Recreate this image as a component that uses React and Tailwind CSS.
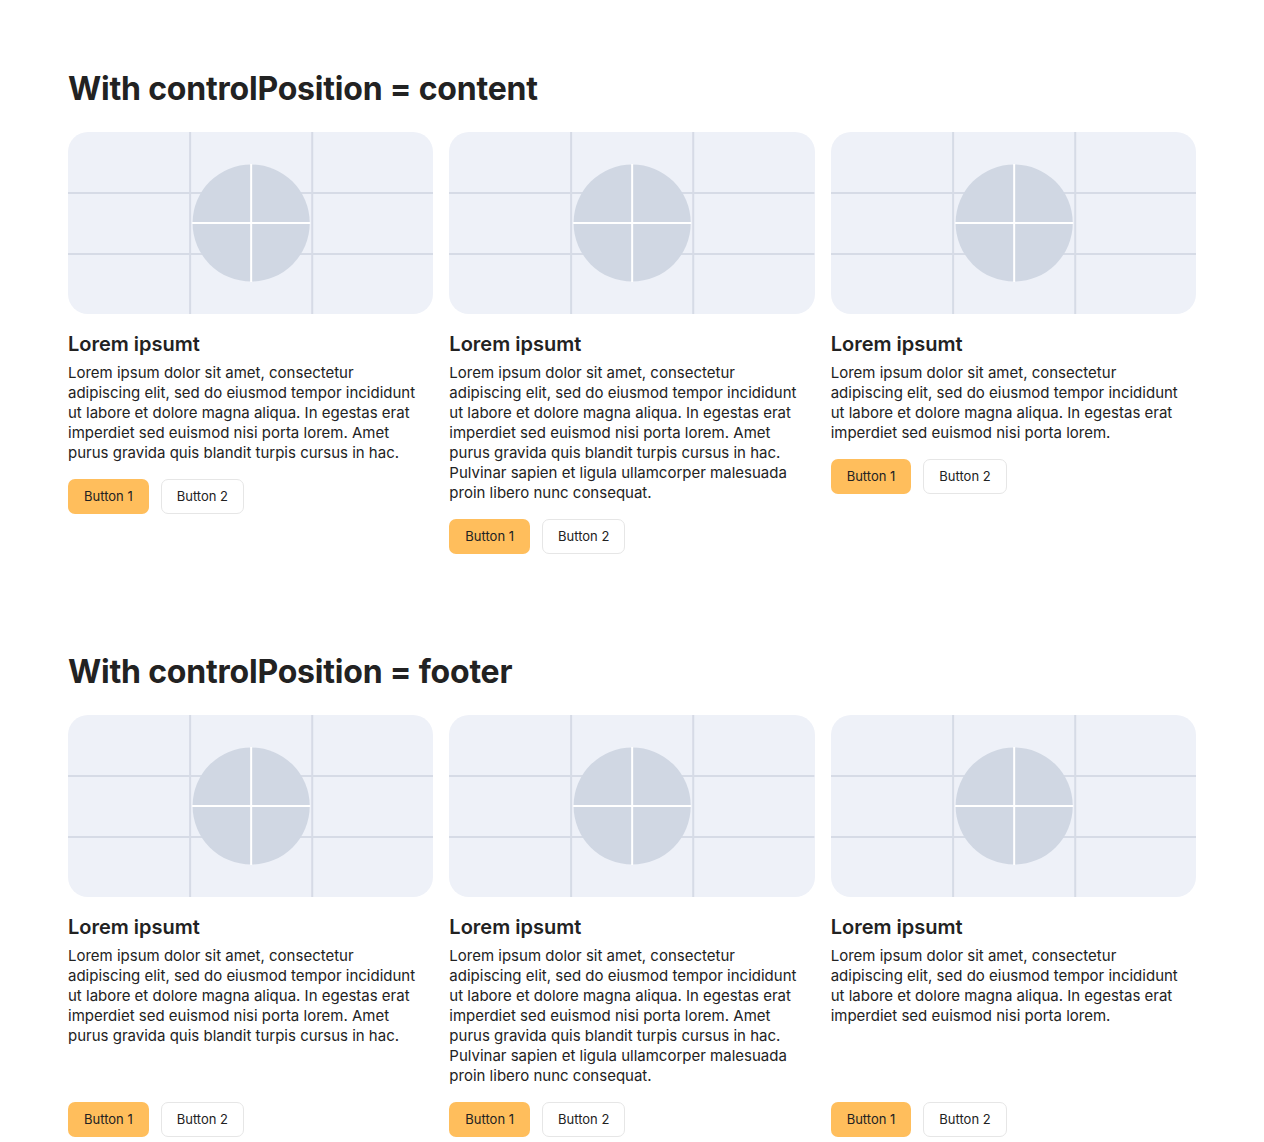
import React from 'react';

const SHORT =
  'Lorem ipsum dolor sit amet, consectetur adipiscing elit, sed do eiusmod tempor incididunt ut labore et dolore magna aliqua. In egestas erat imperdiet sed euismod nisi porta lorem.';
const MEDIUM = SHORT + ' Amet purus gravida quis blandit turpis cursus in hac.';
const LONG = MEDIUM + ' Pulvinar sapien et ligula ullamcorper malesuada proin libero nunc consequat.';

const cards = [MEDIUM, LONG, SHORT];

// placeholder picture: grid lines + quartered circle
const Placeholder = () => (
  <div className="h-[182px] w-full overflow-hidden rounded-[20px] bg-[#eef1f8]">
    <svg className="h-full w-full" viewBox="0 0 365 182" preserveAspectRatio="xMidYMid slice">
      <line x1="122" y1="0" x2="122" y2="182" stroke="#d6dbe6" strokeWidth="2" />
      <line x1="244" y1="0" x2="244" y2="182" stroke="#d6dbe6" strokeWidth="2" />
      <line x1="0" y1="61" x2="365" y2="61" stroke="#d6dbe6" strokeWidth="2" />
      <line x1="0" y1="122" x2="365" y2="122" stroke="#d6dbe6" strokeWidth="2" />
      <circle cx="183" cy="91" r="58.5" fill="#d0d7e3" />
      <line x1="183" y1="32" x2="183" y2="150" stroke="#ffffff" strokeWidth="2" />
      <line x1="124" y1="91" x2="242" y2="91" stroke="#ffffff" strokeWidth="2" />
    </svg>
  </div>
);

const Buttons = () => (
  <div className="mt-4 flex gap-3">
    <button className="h-[35px] rounded-[7px] bg-[#ffbe5c] px-4 text-[13px] text-[#222]">Button 1</button>
    <button className="h-[35px] rounded-[7px] border border-[#e6e6e6] bg-white px-[15px] text-[13px] text-[#222]">
      Button 2
    </button>
  </div>
);

const Card = ({ text, footer }) => (
  <div className="flex flex-col">
    <Placeholder />
    <div className={footer ? 'flex-1 pr-2' : 'pr-2'}>
      <h3 className="mt-[17px] text-[20px] font-semibold leading-[26px] text-[#222]">Lorem ipsumt</h3>
      <p className="mt-[6px] text-[15px] leading-5 text-[#222]">{text}</p>
    </div>
    <Buttons />
  </div>
);

const Section = ({ title, footer }) => (
  <section>
    <h2 className="text-[32px] font-bold leading-10 tracking-[-0.2px] text-[#222]">{title}</h2>
    <div className="mt-[23px] grid grid-cols-3 gap-4">
      {cards.map((t, i) => (
        <Card key={i} text={t} footer={footer} />
      ))}
    </div>
  </section>
);

export default function App() {
  return (
    <div className="min-h-screen bg-white px-[68px] pb-10 pt-[69px] font-['Inter',sans-serif]">
      <Section title="With controlPosition = content" />
      <div className="h-[98px]" />
      <Section title="With controlPosition = footer" footer />
    </div>
  );
}
